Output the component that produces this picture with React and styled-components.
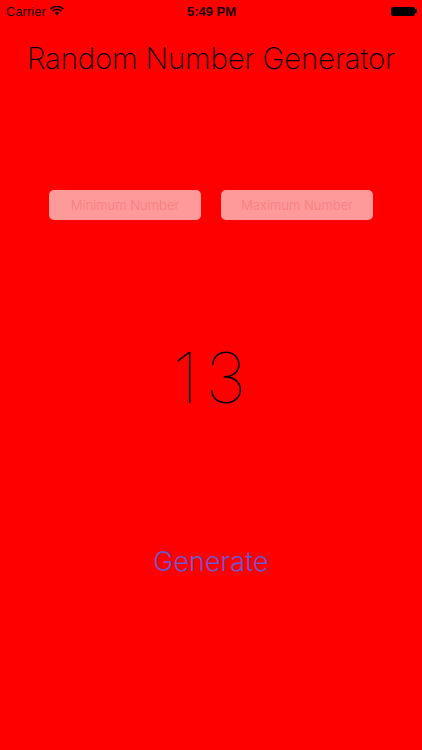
import styled, { createGlobalStyle } from "styled-components";

const GlobalStyle = createGlobalStyle`
  html, body {
    margin: 0;
    padding: 0;
    background: #ff0000;
  }
  body {
    font-family: "Liberation Sans", Arial, sans-serif;
  }
`;

const Screen = styled.div`
  width: 422px;
  height: 750px;
  background: #ff0000;
  display: flex;
  flex-direction: column;
  overflow: hidden;
`;

const StatusBar = styled.div`
  height: 22px;
  display: grid;
  grid-template-columns: 1fr auto 1fr;
  align-items: center;
  padding: 0 5px 0 6px;
  font-family: "Liberation Sans", Arial, sans-serif;
  font-size: 13px;
  color: #1a0000;
`;

const Carrier = styled.div`
  display: flex;
  align-items: center;
  gap: 4px;
`;

const Clock = styled.div`
  font-weight: bold;
`;

const Battery = styled.div`
  justify-self: end;
  display: flex;
  align-items: center;
`;

const Cell = styled.div`
  width: 24px;
  height: 9px;
  border-radius: 2px;
  background: #000;
`;

const Tip = styled.div`
  width: 2px;
  height: 4px;
  background: #000;
  border-radius: 0 1px 1px 0;
`;

const Title = styled.h1`
  margin: 18px 0 0;
  text-align: center;
  font-family: Inter, "Liberation Sans", sans-serif;
  font-weight: 200;
  font-size: 29.5px;
  letter-spacing: -0.2px;
  color: #000;
`;

const Inputs = styled.div`
  margin-top: 114px;
  display: flex;
  justify-content: center;
  gap: 20px;
`;

const Field = styled.input`
  width: 152px;
  height: 30px;
  box-sizing: border-box;
  border: none;
  border-radius: 5px;
  background: #ff9a9a;
  text-align: center;
  font-family: Inter, "Liberation Sans", sans-serif;
  font-weight: 300;
  font-size: 13px;
  outline: none;
  &::placeholder {
    color: #f77d7d;
  }
`;

const Result = styled.div`
  margin-top: 120px;
  text-align: center;
  font-family: Inter, "Liberation Sans", sans-serif;
  font-weight: 100;
  font-size: 70px;
  line-height: 76px;
  letter-spacing: 7px;
  text-indent: 4px;
  color: #000;
`;

const GenerateButton = styled.button`
  margin: 129px auto 0;
  border: none;
  background: none;
  padding: 0;
  font-family: Inter, "Liberation Sans", sans-serif;
  font-weight: 300;
  font-size: 27px;
  color: #6e56cc;
  cursor: pointer;
`;

const Wifi = () => (
  <svg width="14" height="10" viewBox="0 0 14 10">
    <path d="M7 9.5 L4.6 7 A3.4 3.4 0 0 1 9.4 7 Z" fill="#1a0000" />
    <path d="M2.6 5.1 A6.2 6.2 0 0 1 11.4 5.1" stroke="#1a0000" strokeWidth="1.6" fill="none" />
    <path d="M0.6 3.1 A9 9 0 0 1 13.4 3.1" stroke="#1a0000" strokeWidth="1.6" fill="none" />
  </svg>
);

export default function App() {
  return (
    <>
      <GlobalStyle />
      <Screen>
        <StatusBar>
          <Carrier>
            Carrier <Wifi />
          </Carrier>
          <Clock>5:49 PM</Clock>
          <Battery>
            <Cell />
            <Tip />
          </Battery>
        </StatusBar>
        <Title>Random Number Generator</Title>
        <Inputs>
          <Field placeholder="Minimum Number" />
          <Field placeholder="Maximum Number" />
        </Inputs>
        <Result>13</Result>
        <GenerateButton>Generate</GenerateButton>
      </Screen>
    </>
  );
}
